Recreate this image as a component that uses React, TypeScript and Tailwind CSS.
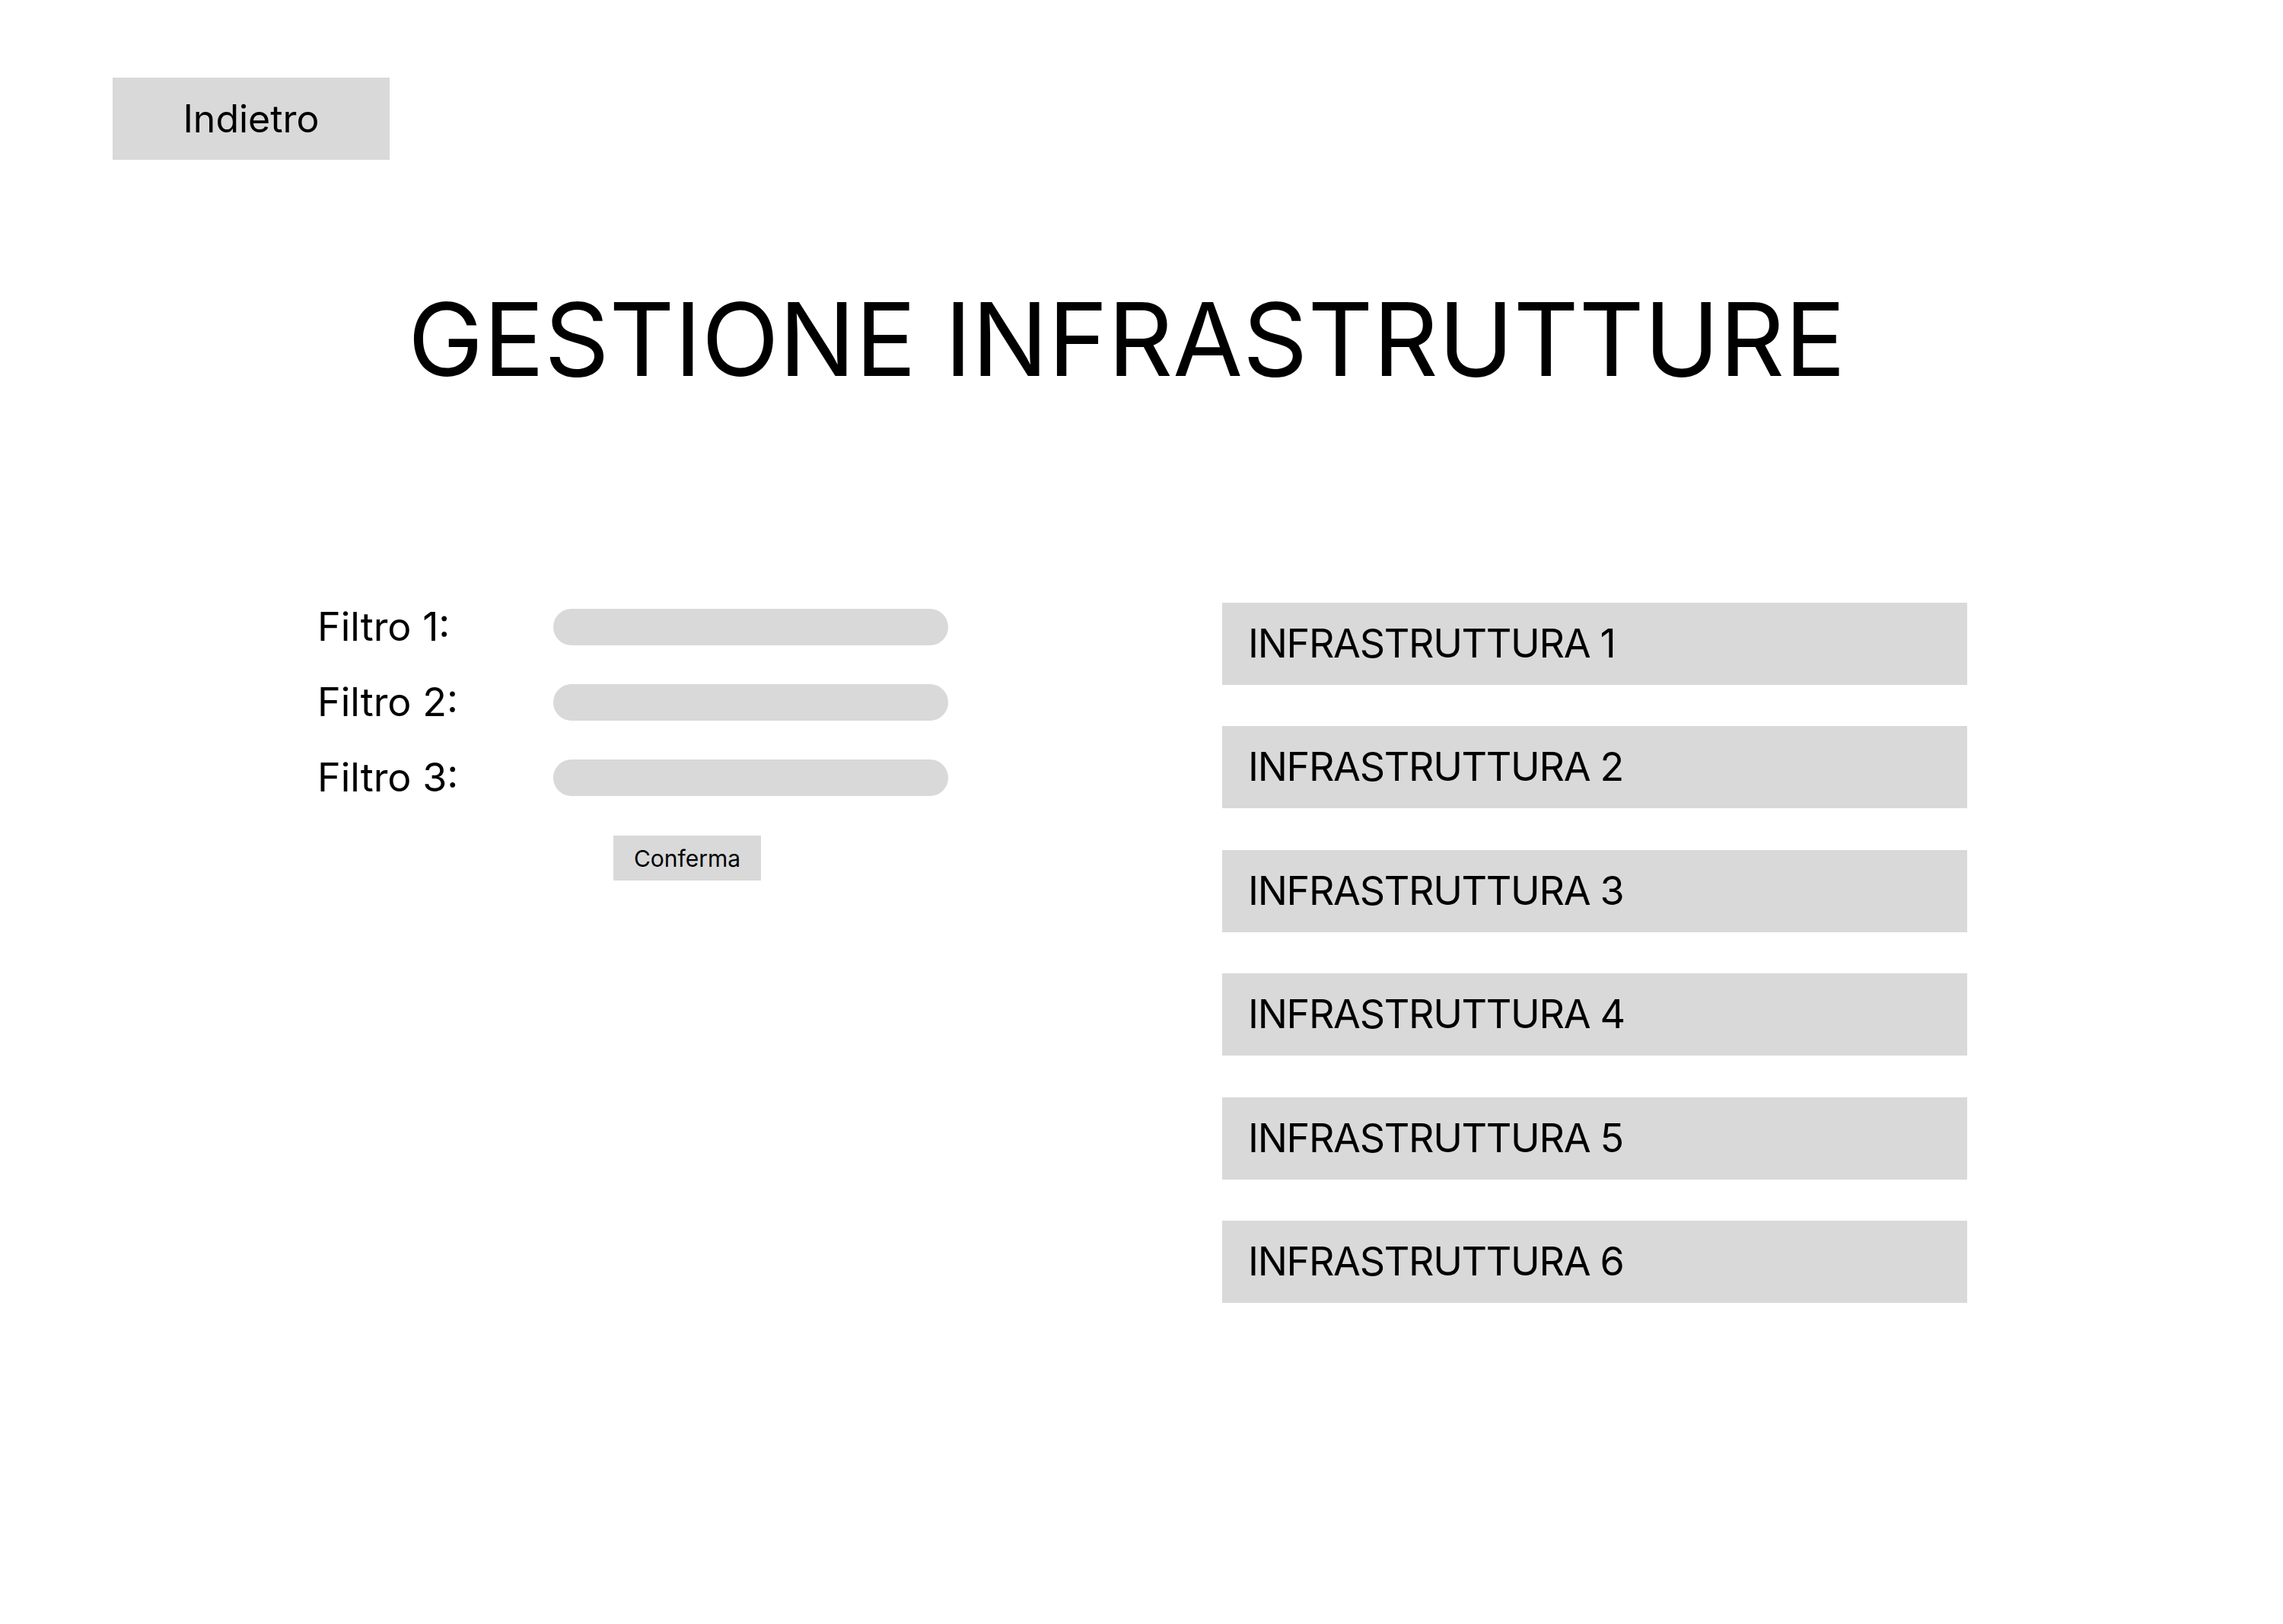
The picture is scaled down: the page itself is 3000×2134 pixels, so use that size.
const filters = ['Filtro 1:', 'Filtro 2:', 'Filtro 3:']
const infra = [1, 2, 3, 4, 5, 6]

export default function App() {
  return (
    <div className="min-h-screen bg-white text-black font-['Inter',sans-serif]">
      <div className="pl-[148px] pt-[102px]">
        <button className="w-[364px] h-[108px] bg-[#d9d9d9] text-[50px] leading-none">Indietro</button>
      </div>
      <h1 className="mt-[169px] pl-[536px] text-[133px] leading-none font-normal whitespace-nowrap">GESTIONE INFRASTRUTTURE</h1>
      <div className="flex mt-[280px]">
        <div className="ml-[417px] mt-[8px] flex flex-col">
          <div className="flex flex-col gap-[51px]">
            {filters.map((f) => (
              <div key={f} className="flex items-center h-[48px]">
                <span className="w-[310px] text-[52px] leading-none">{f}</span>
                <div className="w-[519px] h-[48px] rounded-full bg-[#d9d9d9]" />
              </div>
            ))}
          </div>
          <button className="ml-[389px] mt-[52px] w-[194px] h-[59px] bg-[#d9d9d9] text-[30px] leading-none">Conferma</button>
        </div>
        <div className="ml-[360px] flex flex-col gap-[54.4px]">
          {infra.map((n) => (
            <div key={n} className="w-[979px] h-[108px] bg-[#d9d9d9] flex items-center pl-[34px] text-[52px] leading-none tracking-[-1.3px]">
              INFRASTRUTTURA {n}
            </div>
          ))}
        </div>
      </div>
    </div>
  )
}
